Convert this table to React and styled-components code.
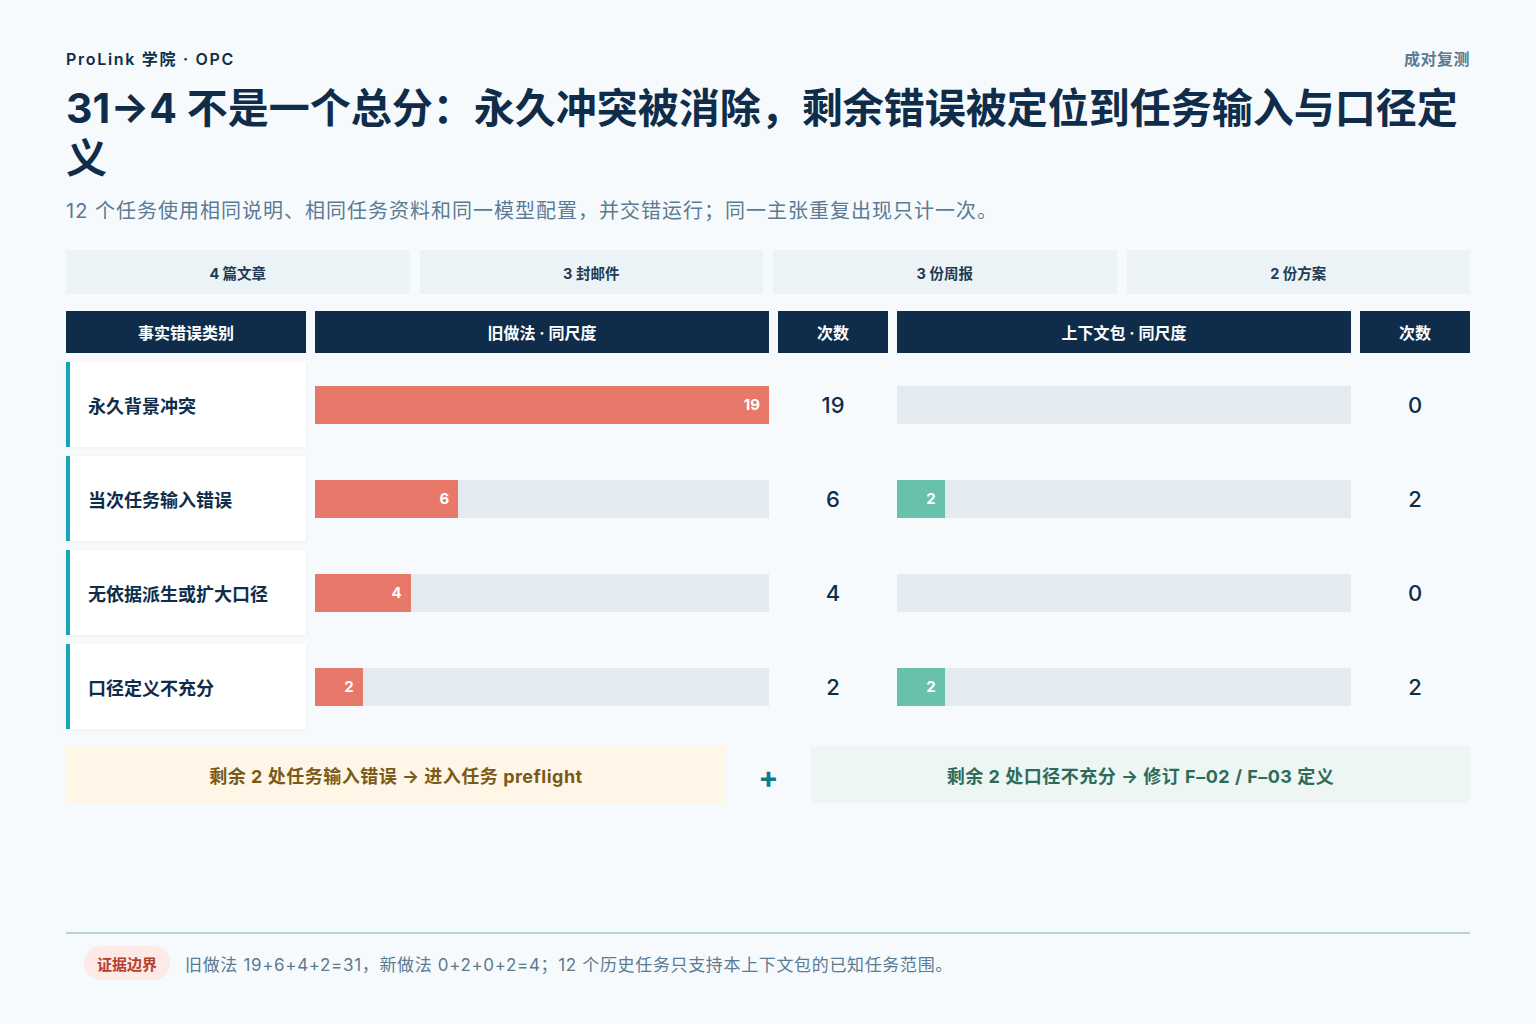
import React from "react";
import styled, { createGlobalStyle } from "styled-components";

const MAX = 19;

const rows = [
    { label: "永久背景冲突", before: 19, after: 0 },
    { label: "当次任务输入错误", before: 6, after: 2 },
    { label: "无依据派生或扩大口径", before: 4, after: 0 },
    { label: "口径定义不充分", before: 2, after: 2 },
];

const stats = ["4 篇文章", "3 封邮件", "3 份周报", "2 份方案"];

export default function App() {
    return (
        <>
            <GlobalStyle/>
            <Page>
                <TopBar>
                    <Brand>ProLink 学院 · OPC</Brand>
                    <Tag>成对复测</Tag>
                </TopBar>
                <Title>31→4 不是一个总分：永久冲突被消除，剩余错误被定位到任务输入与口径定义</Title>
                <Subtitle>12 个任务使用相同说明、相同任务资料和同一模型配置，并交错运行；同一主张重复出现只计一次。</Subtitle>

                <StatRow>
                    {stats.map((s) => <Stat key={s}>{s}</Stat>)}
                </StatRow>

                <Table>
                    <HeadCell>事实错误类别</HeadCell>
                    <HeadCell>旧做法 · 同尺度</HeadCell>
                    <HeadCell>次数</HeadCell>
                    <HeadCell>上下文包 · 同尺度</HeadCell>
                    <HeadCell>次数</HeadCell>
                    {rows.map((r) => (
                        <React.Fragment key={r.label}>
                            <LabelCard>{r.label}</LabelCard>
                            <BarCell><Bar value={r.before} tone="old"/></BarCell>
                            <Count>{r.before}</Count>
                            <BarCell><Bar value={r.after} tone="new"/></BarCell>
                            <Count>{r.after}</Count>
                        </React.Fragment>
                    ))}
                </Table>

                <Callouts>
                    <Callout $tone="warn">剩余 2 处任务输入错误 → 进入任务 preflight</Callout>
                    <Plus>+</Plus>
                    <Callout $tone="ok">剩余 2 处口径不充分 → 修订 F–02 / F–03 定义</Callout>
                </Callouts>

                <Footer>
                    <Pill>证据边界</Pill>
                    <FootText>旧做法 19+6+4+2=31，新做法 0+2+0+2=4；12 个历史任务只支持本上下文包的已知任务范围。</FootText>
                </Footer>
            </Page>
        </>
    );
}

function Bar({ value, tone }) {
    return (
        <Track>
            {value > 0 && (
                <Fill $tone={tone} style={{ width: `${(value / MAX) * 100}%` }}>
                    {value}
                </Fill>
            )}
        </Track>
    );
}

const GlobalStyle = createGlobalStyle`
    * { box-sizing: border-box; }
    body {
        margin: 0;
        background: #f6fafc;
        font-family: Inter, "Noto Sans CJK SC", sans-serif;
        color: #0f2d4a;
    }
`;

const Page = styled.div`
    width: 1536px;
    height: 1024px;
    padding: 48px 66px 0;
    display: flex;
    flex-direction: column;
`;

const TopBar = styled.div`
    display: flex;
    justify-content: space-between;
    align-items: center;
`;

const Brand = styled.div`
    font-size: 16px;
    font-weight: 600;
    letter-spacing: 1.7px;
    color: #0f2d4a;
    line-height: 22px;
`;

const Tag = styled.div`
    font-size: 16px;
    font-weight: 700;
    letter-spacing: 0.5px;
    color: #5b7a93;
    line-height: 22px;
`;

const Title = styled.h1`
    margin: 13px 0 0;
    font-size: 41px;
    line-height: 50px;
    font-weight: 700;
    color: #0f2d4a;
`;

const Subtitle = styled.p`
    margin: 13px 0 0;
    font-size: 20px;
    line-height: 30px;
    color: #5b7a93;
    letter-spacing: 1px;
`;

const StatRow = styled.div`
    margin-top: 24px;
    display: grid;
    grid-template-columns: repeat(4, 1fr);
    gap: 10px;
`;

const Stat = styled.div`
    height: 44px;
    background: #ebf3f7;
    display: flex;
    align-items: center;
    justify-content: center;
    font-size: 14.5px;
    font-weight: 700;
    color: #1f3a52;
`;

const Table = styled.div`
    margin-top: 17px;
    display: grid;
    grid-template-columns: 240px 454px 110px 454px 110px;
    grid-auto-rows: 85px;
    grid-template-rows: 42px;
    gap: 9px;
`;

const HeadCell = styled.div`
    background: #0f2d4a;
    color: #ffffff;
    font-size: 16px;
    font-weight: 700;
    display: flex;
    align-items: center;
    justify-content: center;
`;

const LabelCard = styled.div`
    background: #ffffff;
    border-left: 4px solid #17a6b7;
    box-shadow: 0 1px 4px rgba(15, 45, 74, 0.05);
    padding-left: 18px;
    display: flex;
    align-items: center;
    font-size: 18px;
    font-weight: 700;
    color: #0f2d4a;
`;

const BarCell = styled.div`
    display: flex;
    align-items: center;
`;

const Track = styled.div`
    width: 100%;
    height: 38px;
    background: #e3eaf0;
    display: flex;
`;

const Fill = styled.div`
    height: 100%;
    background: ${(p) => (p.$tone === "new" ? "#67c1ac" : "#e8796a")};
    color: #ffffff;
    font-size: 15px;
    font-weight: 700;
    display: flex;
    align-items: center;
    justify-content: flex-end;
    padding-right: 9px;
`;

const Count = styled.div`
    display: flex;
    align-items: center;
    justify-content: center;
    font-size: 22px;
    font-weight: 500;
    color: #0f2d4a;
`;

const Callouts = styled.div`
    margin-top: 17px;
    display: grid;
    grid-template-columns: 660px 1fr 659px;
    align-items: center;
`;

const Callout = styled.div`
    height: 57px;
    display: flex;
    align-items: center;
    justify-content: center;
    font-size: 18px;
    font-weight: 700;
    letter-spacing: 0.5px;
    background: ${(p) => (p.$tone === "warn" ? "#fff6e8" : "#edf6f3")};
    color: ${(p) => (p.$tone === "warn" ? "#7a5a17" : "#2d6b5a")};
`;

const Plus = styled.div`
    text-align: center;
    font-size: 30px;
    font-weight: 700;
    color: #137a85;
    line-height: 1;
    padding-top: 4px;
`;

const Footer = styled.div`
    margin-top: auto;
    margin-bottom: 44px;
    border-top: 2px solid #b7d0de;
    padding: 12px 0 0 18px;
    display: flex;
    align-items: center;
    gap: 15px;
`;

const Pill = styled.div`
    height: 34px;
    padding: 0 13px;
    border-radius: 17px;
    background: #fde9e6;
    color: #b3402f;
    font-size: 15px;
    font-weight: 700;
    display: flex;
    align-items: center;
`;

const FootText = styled.div`
    font-size: 17px;
    letter-spacing: 0.65px;
    color: #5b7a93;
`;
